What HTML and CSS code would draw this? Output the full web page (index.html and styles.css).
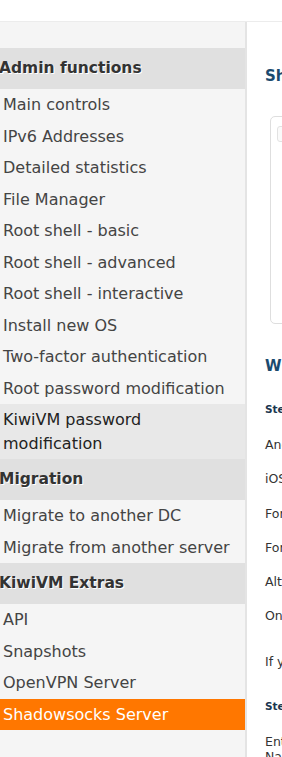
FILE: index.html
```html
<!DOCTYPE html>
<html>
<head>
  <title>KiwiVM - Shadowsocks Server</title>
  <link rel="stylesheet" href="styles.css">
</head>
<body>

  <div class="topbar"></div>

  <div class="layout">
    <div class="sidebar">
      <div class="menu-head">Admin functions</div>
      <a class="menu-item" href="#">Main controls</a>
      <a class="menu-item" href="#">IPv6 Addresses</a>
      <a class="menu-item" href="#">Detailed statistics</a>
      <a class="menu-item" href="#">File Manager</a>
      <a class="menu-item" href="#">Root shell - basic</a>
      <a class="menu-item" href="#">Root shell - advanced</a>
      <a class="menu-item" href="#">Root shell - interactive</a>
      <a class="menu-item" href="#">Install new OS</a>
      <a class="menu-item" href="#">Two-factor authentication</a>
      <a class="menu-item" href="#">Root password modification</a>
      <a class="menu-item shaded" href="#">KiwiVM password modification</a>

      <div class="menu-head">Migration</div>
      <a class="menu-item" href="#">Migrate to another DC</a>
      <a class="menu-item" href="#">Migrate from another server</a>

      <div class="menu-head">KiwiVM Extras</div>
      <a class="menu-item" href="#">API</a>
      <a class="menu-item" href="#">Snapshots</a>
      <a class="menu-item" href="#">OpenVPN Server</a>
      <a class="menu-item active" href="#">Shadowsocks Server</a>
    </div>

    <div class="content">
      <h2>Shadowsocks Server</h2>
      <div class="panel">
        <div class="field">server_port</div>
      </div>

      <h2 class="second">What is Shadowsocks?</h2>
      <p class="step">Step 1: Install a client</p>
      <p>Android: download the app from Google Play</p>
      <p>iOS: download the app from the App Store</p>
      <p>For Windows: download the latest release</p>
      <p>For Mac OS X: download ShadowsocksX</p>
      <p>Alternatively, use any compatible client</p>
      <p class="gap">Once installed, open the client</p>
      <p>If you need help, see the documentation</p>
      <p class="step">Step 2: Configure the client</p>
      <p class="tight">Enter the settings shown above<br>Name the profile as you wish</p>
    </div>
  </div>

</body>
</html>
```

FILE: styles.css
```css
body {
  margin: 0;
  font-family: "DejaVu Sans", Verdana, sans-serif;
  background-color: #fff;
  overflow: hidden;
}

.topbar {
  height: 21px;
  border-bottom: 1px solid #ececec;
}

.layout {
  display: flex;
  min-height: 735px;
}

.sidebar {
  flex: 0 0 245px;
  background-color: #f5f5f5;
  border-right: 2px solid #e4e4e4;
  padding-top: 26px;
}

.menu-head {
  background-color: #e0e0e0;
  color: #333;
  font-weight: bold;
  font-size: 15.5px;
  line-height: 41px;
  margin-left: -1px;
  text-shadow: 1px 1px 0 #fff;
}

.menu-item {
  display: block;
  padding: 4px 3px;
  line-height: 23.5px;
  font-size: 16px;
  color: #444;
  text-decoration: none;
}

.menu-item.shaded {
  background-color: #e8e8e8;
  color: #222;
}

.menu-item.active {
  background-color: #ff7700;
  color: #fff;
}

.content {
  flex: 1;
  padding-left: 18px;
  overflow: hidden;
  white-space: nowrap;
  color: #333;
}

.content h2 {
  margin: 44px 0 0;
  font-size: 15px;
  line-height: 20px;
  color: #1b4a6e;
}

.content h2.second {
  margin-top: 32px;
}

.panel {
  margin: 30px 0 0 5px;
  height: 188px;
  width: 300px;
  border: 1px solid #dedede;
  border-radius: 5px;
  padding: 9px 6px;
}

.field {
  height: 14px;
  width: 200px;
  border: 1px solid #e2e2e2;
  border-radius: 3px;
  background-color: #fafafa;
  font-size: 11px;
  color: transparent;
}

.content p {
  margin: 0;
  font-size: 12.5px;
  line-height: 34.2px;
}

.content p.step {
  font-size: 10.5px;
  font-weight: bold;
  color: #1b3650;
  margin-top: 16px;
}

.content p + p.step {
  margin-top: 9px;
}

.content p.step + p {
  margin-top: 2px;
}

.content p.gap {
  margin-bottom: 12px;
}

.content p.step + p.tight {
  line-height: 15px;
  margin-top: 11px;
}
```
